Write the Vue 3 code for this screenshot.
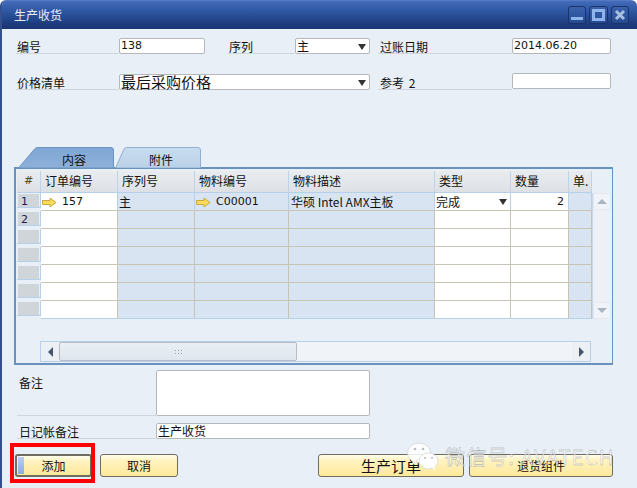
<script setup>
const columns = [
  { title: '#', width: 24, kind: 'num' },
  { title: '订单编号', width: 77, kind: 'white' },
  { title: '序列号', width: 77, kind: 'blue' },
  { title: '物料编号', width: 94, kind: 'blue' },
  { title: '物料描述', width: 146, kind: 'blue' },
  { title: '类型', width: 76, kind: 'white' },
  { title: '数量', width: 58, kind: 'white' },
  { title: '单.', width: 23, kind: 'blue' }
]
const template = columns.map((c) => c.width + 'px').join(' ')
const rows = ['1', '2', '', '', '', '', '']
</script>

<template>
  <div class="window">
    <header class="titlebar">
      <span class="title">生产收货</span>
      <div class="controls">
        <span class="ctl"><svg width="18" height="18" viewBox="0 0 18 18"><rect x="3" y="11" width="12" height="3" fill="#8fb4ec" /></svg></span>
        <span class="ctl ctl-max"><svg width="19" height="18" viewBox="0 0 19 18"><rect x="4.5" y="4.5" width="10" height="9" fill="none" stroke="#8fb4ec" stroke-width="3" /></svg></span>
        <span class="ctl"><svg width="18" height="18" viewBox="0 0 18 18"><path d="M5 5l8 8M13 5l-8 8" stroke="#a9bfdf" stroke-width="3" /></svg></span>
      </div>
    </header>

    <main class="body">
      <div class="form-row first">
        <label class="lab w103">编号</label>
        <div class="input w86 latin">138</div>
        <label class="lab w67 ml23">序列</label>
        <div class="input w75 select"><span>主</span><i class="caret"></i></div>
        <label class="lab w134 ml8 pad2">过账日期</label>
        <div class="input w99 latin">2014.06.20</div>
      </div>
      <div class="form-row second">
        <label class="lab w103">价格清单</label>
        <div class="input w251 select big"><span>最后采购价格</span><i class="caret"></i></div>
        <label class="lab w134 ml8 pad2 spaced">参考 2</label>
        <div class="input w99 up1"></div>
      </div>

      <div class="tabs">
        <div class="tab tab-on">
          <svg class="tab-shape" width="96" height="21" viewBox="0 0 96 21">
            <defs><linearGradient id="t1" x1="0" y1="0" x2="0" y2="1"><stop offset="0" stop-color="#80a6d3" /><stop offset="1" stop-color="#8db0d9" /></linearGradient></defs>
            <path d="M0.5 21L17 1.5Q18 .5 20 .5H93Q95.500 .5 95.500 3V21Z" fill="url(#t1)" stroke="#6e94c2" />
          </svg>
          <span class="tab-text">内容</span>
        </div>
        <div class="tab tab-off">
          <svg class="tab-shape" width="86" height="21" viewBox="0 0 86 21">
            <defs><linearGradient id="t2" x1="0" y1="0" x2="0" y2="1"><stop offset="0" stop-color="#c9dcee" /><stop offset="1" stop-color="#bad1e8" /></linearGradient></defs>
            <path d="M0.500 21L9 2Q10 .5 12 .5H83Q85.500 .5 85.500 3V21Z" fill="url(#t2)" stroke="#8fb0d2" />
          </svg>
          <span class="tab-text">附件</span>
        </div>
      </div>

      <section class="panel">
        <div class="grid-wrap">
          <div class="grid">
            <div class="grid-row head" :style="{ gridTemplateColumns: template }">
              <div v-for="c in columns" :key="c.title" class="hcell" :class="{ 'hcell-num': c.kind === 'num' }">{{ c.title }}</div>
            </div>
            <div v-for="(r, i) in rows" :key="i" class="grid-row" :class="{ last: i === 6 }" :style="{ gridTemplateColumns: template }">
              <div v-for="(c, j) in columns" :key="j" class="cell" :class="c.kind">
                <template v-if="j === 0"><span class="num" :class="{ 'num-sel': i === 0 }">{{ r }}</span></template>
                <template v-else-if="i === 0">
                  <span v-if="j === 1" class="link">
                    <svg width="15" height="11" viewBox="0 0 15 11"><path d="M.5 3.500H8V1l6 4.500L8 10V7.500H.5Z" fill="#f8dc5a" stroke="#c9a93a" /></svg><em>157</em>
                  </span>
                  <span v-else-if="j === 2">主</span>
                  <span v-else-if="j === 3" class="link">
                    <svg width="15" height="11" viewBox="0 0 15 11"><path d="M.5 3.500H8V1l6 4.500L8 10V7.500H.5Z" fill="#f8dc5a" stroke="#c9a93a" /></svg><em>C00001</em>
                  </span>
                  <span v-else-if="j === 4" class="desc">华硕 Intel AMX主板</span>
                  <span v-else-if="j === 5" class="type"><span>完成</span><i class="caret"></i></span>
                  <span v-else-if="j === 6" class="qty">2</span>
                </template>
              </div>
            </div>
          </div>
          <aside class="vscroll">
            <div class="vs-head"></div>
            <div class="vs-track">
              <div class="vs-btn"><i class="tri-up"></i></div>
              <div class="vs-btn"><i class="tri-down"></i></div>
            </div>
          </aside>
        </div>
        <div class="hscroll">
          <div class="hs-btn"><i class="tri-left"></i></div>
          <div class="hs-thumb"><i class="grip"></i></div>
          <div class="hs-track"></div>
          <div class="hs-btn"><i class="tri-right"></i></div>
        </div>
      </section>

      <div class="note-row">
        <label class="lab note-lab">备注</label>
        <div class="input note-area"></div>
      </div>
      <div class="journal-row">
        <label class="lab note-lab2">日记帐备注</label>
        <div class="input journal">生产收货</div>
      </div>

      <footer class="actions">
        <button class="btn btn-add"><i class="focus-bar"></i>添加</button>
        <button class="btn btn-cancel">取消</button>
        <span class="spacer"></span>
        <button class="btn btn-order">生产订单</button>
        <button class="btn btn-return">退货组件</button>
      </footer>
    </main>

    <div class="redbox"></div>
    <div class="watermark">
      <svg width="32" height="29" viewBox="0 0 32 29">
        <ellipse cx="12" cy="11" rx="11.500" ry="10" fill="#fff" fill-opacity=".85" stroke="#c9ccd0" stroke-width=".6" />
        <path d="M6 18l-1 5 6-3z" fill="#fff" fill-opacity=".85" />
        <ellipse cx="21.500" cy="19" rx="9.500" ry="8" fill="#fff" stroke="#c9ccd0" stroke-width=".6" />
        <path d="M25 25l3 4-.5-5z" fill="#fff" />
        <circle cx="8" cy="7" r="1.300" fill="#b9bdc2" /><circle cx="16" cy="7" r="1.300" fill="#b9bdc2" />
        <circle cx="18" cy="16" r="1.100" fill="#b9bdc2" /><circle cx="25" cy="16" r="1.100" fill="#b9bdc2" />
      </svg>
      <span class="wm-text">微信号: AVATECH</span>
    </div>
  </div>
</template>

<style>
html, body { margin: 0; background: #fff; }
</style>

<style scoped>
.window {
  position: relative;
  width: 637px;
  height: 488px;
  box-sizing: border-box;
  overflow: hidden;
  background: #e8eff6;
  border-left: 2px solid #34508f;
  border-radius: 6px 6px 0 0;
  font: 12px "Noto Sans CJK SC", "DejaVu Sans", sans-serif;
  color: #111;
}
.titlebar {
  margin-left: -2px;
  height: 29px;
  box-sizing: border-box;
  display: flex;
  align-items: center;
  justify-content: space-between;
  padding: 0 8px 0 14px;
  background: linear-gradient(#5a80c8 0, #4169b5 6%, #3059a6 35%, #1c3a7c 85%, #1a3570 100%);
}
.title { color: #e6edf7; font-size: 12px; line-height: 29px; }
.controls { display: flex; gap: 3px; }
.ctl {
  width: 18px;
  height: 18px;
  box-sizing: border-box;
  display: block;
  border: 1px solid #1b3467;
  border-radius: 3px;
  background: linear-gradient(#3a62ad, #254b92);
  overflow: hidden;
}
.ctl svg { display: block; margin: -1px; }
.ctl-max { width: 19px; }

.body { margin-left: -2px; }
.form-row { display: flex; padding-left: 16px; height: 16px; }
.form-row.first { margin-top: 9px; }
.form-row.second { margin-top: 20px; }
.lab {
  box-sizing: border-box;
  display: block;
  padding-left: 1px;
  line-height: 18px;
  height: 16px;
  border-bottom: 1px solid #d0d6dc;
  white-space: nowrap;
}
.pad2 { padding-left: 2px; }
.spaced { word-spacing: 2px; }
.input {
  box-sizing: border-box;
  height: 16px;
  background: #fff;
  border: 1px solid #b5b8bb;
  border-radius: 2px;
  padding-left: 1px;
  line-height: 14px;
  white-space: nowrap;
  font-size: 12px;
}
.latin { font-family: "DejaVu Sans", sans-serif; font-size: 11px; color: #111; }
.w103 { width: 103px; }
.w86 { width: 86px; }
.w67 { width: 67px; }
.w75 { width: 75px; }
.w134 { width: 134px; }
.w99 { width: 99px; }
.w251 { width: 251px; }
.ml23 { margin-left: 23px; }
.ml8 { margin-left: 8px; }
.up1 { margin-top: -1px; }
.select { display: flex; align-items: center; justify-content: space-between; padding-right: 3px; }
.big { font-size: 15px; }
.caret {
  display: block;
  width: 0;
  height: 0;
  border-left: 4px solid transparent;
  border-right: 4px solid transparent;
  border-top: 6px solid #333;
  margin-top: 1px;
}

.tabs { display: flex; gap: 1px; margin: 57px 0 0 18px; height: 21px; position: relative; z-index: 1; }
.tab { position: relative; height: 21px; text-align: center; }
.tab-on { width: 96px; padding-left: 0; }
.tab-off { width: 86px; }
.tab-shape { position: absolute; left: 0; top: 0; display: block; }
.tab-text { position: relative; line-height: 25px; display: block; }
.tab-on .tab-text { padding-left: 16px; }
.tab-off .tab-text { padding-left: 6px; }

.panel {
  box-sizing: border-box;
  margin: -1px 0 0 14px;
  width: 599px;
  height: 198px;
  border: 2px solid #6a92bf;
  border-width: 2px 1px 2px 2px;
  padding: 2px 0 0 1px;
  background: #e8eff6;
}
.grid-wrap { display: flex; }
.grid { width: 575px; }
.grid-row { display: grid; height: 18px; }
.head { height: 22px; border-bottom: 1px solid #b7d0ea; box-sizing: border-box; }
.hcell {
  box-sizing: border-box;
  padding: 0 0 0 4px;
  line-height: 20px;
  background: linear-gradient(#e9ecef, #dde1e6);
  border-right: 1px solid #bcd3ea;
  white-space: nowrap;
  overflow: hidden;
}
.hcell-num { text-align: center; padding: 0; color: #5a4a20; font-family: "DejaVu Sans", sans-serif; font-size: 11px; }
.cell {
  box-sizing: border-box;
  border-right: 1px solid #c8c4b4;
  border-bottom: 1px solid #c8c4b4;
  line-height: 17px;
  white-space: nowrap;
  overflow: hidden;
  padding-left: 1px;
  min-width: 0;
}
.grid-row:nth-child(2) .cell { border-right-color: #b7d0ea; }
.last .cell { border-bottom-color: #b7d0ea; }
.white { background: #fff; }
.blue { background: #d9e4f2; }
.cell.num { background: #e8eff6; padding: 1px; border-color: #b7d0ea; }
.num {
  display: block;
  height: 15px;
  line-height: 15px;
  padding-left: 3px;
  background: #d0d5da;
  color: #1a1a50;
  font: 11px/15px "DejaVu Sans", sans-serif;
}
.link { display: flex; align-items: center; gap: 5px; padding-top: 2px; line-height: 14px; }
.link + .link { gap: 4px; }
.link em { font: normal 11px/14px "DejaVu Sans", sans-serif; }
.desc { font-size: 12px; padding-left: 1px; }
.type { display: flex; align-items: center; justify-content: space-between; padding-right: 3px; }
.qty { display: block; text-align: right; padding-right: 4px; font: 11px/17px "DejaVu Sans", sans-serif; }

.vscroll { width: 19px; }
.vs-head { height: 22px; }
.vs-track {
  box-sizing: border-box;
  height: 126px;
  background: #edf1f7;
  border-left: 1px solid #c5d8ec;
  display: flex;
  flex-direction: column;
  justify-content: space-between;
}
.vs-btn {
  height: 17px;
  background: #f0f3f7;
  border: 1px solid #e3e8ee;
  box-sizing: border-box;
  display: flex;
  align-items: center;
  justify-content: center;
}
.tri-up { width: 0; height: 0; border: 5px solid transparent; border-top: 0; border-bottom: 5px solid #a9b3bf; }
.tri-down { width: 0; height: 0; border: 5px solid transparent; border-bottom: 0; border-top: 5px solid #a9b3bf; }
.tri-left { width: 0; height: 0; border: 5px solid transparent; border-left: 0; border-right: 5px solid #45566e; }
.tri-right { width: 0; height: 0; border: 5px solid transparent; border-right: 0; border-left: 5px solid #45566e; }

.hscroll {
  box-sizing: border-box;
  display: flex;
  width: 551px;
  height: 21px;
  margin: 22px 0 0 23px;
  border: 1px solid #b7cfe8;
  background: #f0f4f9;
}
.hs-btn { width: 18px; display: flex; align-items: center; justify-content: center; background: #ecf0f5; }
.hs-thumb {
  box-sizing: border-box;
  width: 238px;
  background: linear-gradient(#e9eff5, #dfe6ee);
  border: 1px solid #b4bcc6;
  border-radius: 2px;
  display: flex;
  align-items: center;
  justify-content: center;
}
.grip {
  display: block;
  width: 8px;
  height: 5px;
  background-image: radial-gradient(#9aa4b0 0.8px, transparent 1px);
  background-size: 3px 3px;
}
.hs-track { flex: 1; }

.note-row { display: flex; margin: 5px 0 0 17px; }
.note-lab { width: 139px; height: 46px; padding: 4px 0 0 2px; line-height: 17px; }
.note-area { width: 214px; height: 46px; }
.journal-row { display: flex; margin: 7px 0 0 17px; }
.note-lab2 { width: 139px; padding-left: 2px; }
.journal { width: 214px; }

.actions { display: flex; margin: 15px 0 0 15px; width: 598px; height: 23px; }
.btn {
  box-sizing: border-box;
  position: relative;
  height: 23px;
  padding: 0;
  font: 12px/19px "Noto Sans CJK SC", sans-serif;
  color: #111;
  border: 1px solid #6f6d60;
  border-radius: 3px;
  background: linear-gradient(#fffdf0 0, #fff3c0 25%, #fee99a 100%);
}
.btn-add { width: 77px; border-width: 2px; }
.focus-bar {
  position: absolute;
  left: 1px;
  top: 1px;
  bottom: 1px;
  width: 6px;
  background: linear-gradient(#b8d0ef, #86aee4);
}
.btn-cancel { width: 78px; margin-left: 8px; }
.spacer { flex: 1; }
.btn-order { width: 146px; font-size: 15px; }
.btn-return { width: 144px; margin-left: 5px; }

.redbox {
  position: absolute;
  left: 8px;
  top: 443px;
  width: 77px;
  height: 32px;
  border: 4px solid #f00;
  pointer-events: none;
}
.watermark {
  position: absolute;
  left: 405px;
  top: 442px;
  display: flex;
  align-items: center;
  gap: 6px;
  height: 29px;
  pointer-events: none;
}
.wm-text {
  color: rgba(255, 255, 255, .6);
  font: 20px "Noto Sans CJK SC", sans-serif;
  letter-spacing: 1.2px;
  white-space: nowrap;
  -webkit-text-stroke: .35px rgba(130, 135, 140, .8);
}
</style>
